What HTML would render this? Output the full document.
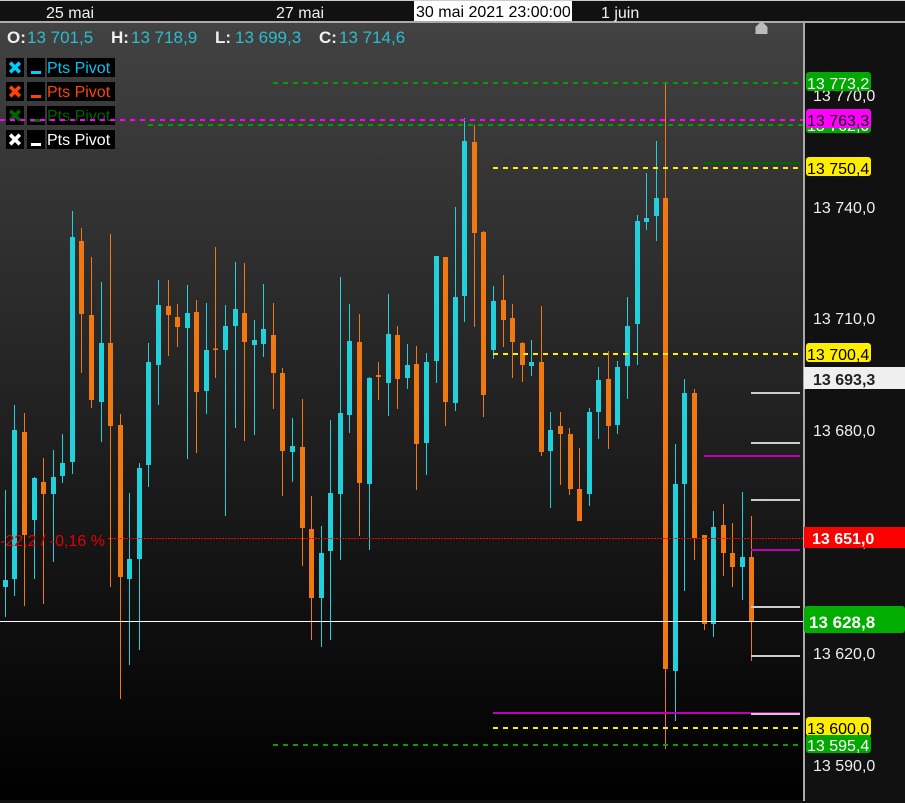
<!DOCTYPE html>
<html><head><meta charset="utf-8"><title>Chart</title>
<style>html,body{margin:0;padding:0;background:#111;width:905px;height:803px;overflow:hidden}svg{display:block}text{font-family:"Liberation Sans",sans-serif;font-size:16px}</style></head>
<body>
<svg width="905" height="803" viewBox="0 0 905 803" xmlns="http://www.w3.org/2000/svg">
<defs><linearGradient id="g" x1="0" y1="0" x2="0" y2="1"><stop offset="0" stop-color="#424242"/><stop offset="1" stop-color="#000"/></linearGradient></defs>
<rect width="905" height="803" fill="#111"/>
<rect width="905" height="1" fill="#ccc"/>
<rect y="23" width="803" height="777" fill="url(#g)"/>
<rect y="21" width="905" height="2" fill="#aaa"/>
<rect x="803" y="21" width="2" height="780" fill="#aaa"/>
<path d="M755.5 34V27L761.5 21L767.5 27V34Z" fill="#bbb"/>

<g fill="#f0f0f0">
<text x="46" y="18">25 mai</text><text x="276" y="18">27 mai</text><text x="601" y="18">1 juin</text>
</g>
<rect x="414" y="1" width="158" height="20" fill="#fff"/>
<text x="416" y="17" fill="#000">30 mai 2021 23:00:00</text>

<!-- wicks -->
<path stroke="#22d0dc" stroke-width="1" fill="none" d="M5.5 490V617M14.5 405V596M34.5 477V579M53.5 450V562M62.5 434V483M72.5 211V474M101.5 282V442M129.5 493V665M139.5 463V650M148.5 343V487M158.5 280V405M187.5 285V459M206.5 303V414M225.5 305V516M235.5 262V428M254.5 320V435M263.5 284V357M292.5 418V482M321.5 526V647M330.5 420V640M340.5 277V560M349.5 304V433M369.5 377V550M388.5 294V416M407.5 344V389M426.5 353V475M436.5 256V383M455.5 207V411M464.5 118V322M493.5 286V359M531.5 340V376M550.5 412V508M589.5 408V506M598.5 367V439M617.5 361V434M627.5 297V399M637.5 215V365M646.5 173V230M656.5 141V241M675.5 444V721M684.5 379V591M713.5 511V637M742.5 492V600"/>
<path stroke="#f07810" stroke-width="1" fill="none" d="M24.5 413V606M43.5 458V604M81.5 228V373M91.5 257V408M110.5 234V587M120.5 414V699M168.5 280V356M177.5 304V347M196.5 300V453M215.5 247V378M244.5 263V441M273.5 303V409M282.5 368V496M302.5 399V566M311.5 496V640M359.5 314V536M378.5 362V400M397.5 326V409M416.5 346V490M445.5 257V426M474.5 125V327M483.5 231V417M503.5 275V347M512.5 304V378M522.5 342V382M541.5 306V456M560.5 412V485M569.5 428V495M579.5 448V521M608.5 351V449M665.5 83V749M694.5 389V560M704.5 535V630M723.5 504V576M732.5 523V587M751.5 516V661"/>
<!-- bodies -->
<path fill="#22d0dc" d="M3 580h5V587h-5zM12 430h5V579h-5zM32 478h5V520h-5zM51 477h5V494h-5zM60 463h5V476h-5zM70 237h5V462h-5zM99 343h5V402h-5zM127 559h5V579h-5zM137 468h5V559h-5zM146 362h5V465h-5zM156 305h5V365h-5zM185 313h5V328h-5zM204 350h5V391h-5zM223 326h5V350h-5zM233 309h5V326h-5zM252 340h5V345h-5zM261 329h5V344h-5zM290 446h5V452h-5zM319 553h5V598h-5zM328 493h5V551h-5zM338 413h5V494h-5zM347 341h5V415h-5zM367 378h5V484h-5zM386 334h5V383h-5zM405 365h5V378h-5zM424 362h5V443h-5zM434 256h5V361h-5zM453 297h5V403h-5zM462 141h5V296h-5zM491 301h5V350h-5zM529 362h5V366h-5zM548 430h5V451h-5zM587 412h5V494h-5zM596 380h5V412h-5zM615 367h5V425h-5zM625 326h5V366h-5zM635 221h5V324h-5zM644 218h5V222h-5zM654 198h5V216h-5zM673 484h5V671h-5zM682 393h5V484h-5zM711 527h5V624h-5zM740 557h5V567h-5z"/>
<path fill="#f07810" d="M22 432h5V535h-5zM41 482h5V494h-5zM79 241h5V314h-5zM89 315h5V400h-5zM108 343h5V426h-5zM118 425h5V577h-5zM166 306h5V315h-5zM175 317h5V327h-5zM194 312h5V392h-5zM213 348.500h5V350h-5zM242 313h5V342h-5zM271 335h5V373h-5zM280 373h5V451h-5zM300 447h5V528h-5zM309 529h5V598h-5zM357 342h5V483h-5zM376 375h5V377h-5zM395 335h5V379h-5zM414 364h5V444h-5zM443 257h5V402h-5zM472 142h5V233h-5zM481 232h5V395h-5zM501 300h5V320h-5zM510 318h5V342h-5zM520 343h5V365h-5zM539 362h5V452h-5zM558 426h5V434h-5zM568 434h5V489h-5zM577 489h5V521h-5zM606 379h5V426h-5zM663 198h5V669h-5zM692 393h5V538h-5zM702 535h5V624h-5zM721 525h5V553h-5zM730 553h5V567h-5zM749 557h5V621h-5z"/>

<!-- short levels -->
<rect x="704" y="162" width="96" height="2" fill="#006800"/>
<rect x="704" y="455" width="96" height="2" fill="#c000b0"/>
<rect x="751" y="549" width="49" height="2" fill="#c000b0"/>
<rect x="493" y="712" width="307" height="2" fill="#c000b0"/>
<g fill="#ccc">
<rect x="751" y="392" width="49" height="2"/><rect x="751" y="442" width="49" height="2"/><rect x="751" y="499" width="49" height="2"/><rect x="751" y="606" width="49" height="2"/><rect x="751" y="655" width="49" height="2"/><rect x="751" y="713" width="49" height="2"/>
</g>

<!-- legend -->
<g>
<rect x="6" y="58" width="18" height="19" fill="#000"/><rect x="27" y="58" width="18" height="19" fill="#000"/><rect x="47" y="58" width="68" height="19" fill="#000"/>
<path d="M10.200 62.700L19.800 72.300M19.800 62.700L10.200 72.300" stroke="#00ccff" stroke-width="3.600"/>
<rect x="31" y="71" width="10" height="3" fill="#00ccff"/>
<text x="47" y="73" fill="#00c4f4">Pts Pivot</text>
<rect x="6" y="82" width="18" height="19" fill="#000"/><rect x="27" y="82" width="18" height="19" fill="#000"/><rect x="47" y="82" width="68" height="19" fill="#000"/>
<path d="M10.200 86.700L19.800 96.300M19.800 86.700L10.200 96.300" stroke="#ff4500" stroke-width="3.600"/>
<rect x="31" y="95" width="10" height="3" fill="#ff4500"/>
<text x="47" y="97" fill="#ff4500">Pts Pivot</text>
<rect x="6" y="106" width="18" height="19" fill="#000"/><rect x="27" y="106" width="18" height="19" fill="#000"/><rect x="47" y="106" width="68" height="19" fill="#000"/>
<path d="M10.200 110.700L19.800 120.300M19.800 110.700L10.200 120.300" stroke="#006400" stroke-width="3.600"/>
<rect x="31" y="119" width="10" height="3" fill="#006400"/>
<text x="47" y="121" fill="#006400">Pts Pivot</text>
<rect x="6" y="130" width="18" height="19" fill="#000"/><rect x="27" y="130" width="18" height="19" fill="#000"/><rect x="47" y="130" width="68" height="19" fill="#000"/>
<path d="M10.200 134.700L19.800 144.300M19.800 134.700L10.200 144.300" stroke="#fff" stroke-width="3.600"/>
<rect x="31" y="143" width="10" height="3" fill="#fff"/>
<text x="47" y="145" fill="#fff">Pts Pivot</text>
</g>

<!-- dashed levels -->
<g fill="none" stroke-width="2" stroke-dasharray="5 5">
<path d="M273 83H803" stroke="#00a000"/>
<path d="M148 125H803" stroke="#00a000"/>
<path d="M0 120H803" stroke="#ff00ff"/>
<path d="M493 168H803" stroke="#ffee00"/>
<path d="M493 354H803" stroke="#ffee00"/>
<path d="M493 728H803" stroke="#ffee00"/>
<path d="M273 745H803" stroke="#00a000"/>
</g>
<path d="M108 538.500H803" stroke="#f00" stroke-width="1" stroke-dasharray="2 1" fill="none"/>
<rect x="0" y="621" width="803" height="1" fill="#fff"/>
<text x="0" y="546" fill="#e60000">-22,2 / -0,16 %</text>

<!-- OHLC -->
<g>
<text x="7" y="43" fill="#f0f0f0" font-weight="bold" style="font-size:17px">O:</text><text x="27" y="43" fill="#2cbccf" style="font-size:17px">13 701,5</text>
<text x="111" y="43" fill="#f0f0f0" font-weight="bold" style="font-size:17px">H:</text><text x="131" y="43" fill="#2cbccf" style="font-size:17px">13 718,9</text>
<text x="215" y="43" fill="#f0f0f0" font-weight="bold" style="font-size:17px">L:</text><text x="235" y="43" fill="#2cbccf" style="font-size:17px">13 699,3</text>
<text x="319" y="43" fill="#f0f0f0" font-weight="bold" style="font-size:17px">C:</text><text x="339" y="43" fill="#2cbccf" style="font-size:17px">13 714,6</text>
</g>

<!-- axis -->
<g fill="#eee">
<text x="813" y="101">13 770,0</text><text x="813" y="213">13 740,0</text><text x="813" y="324">13 710,0</text><text x="813" y="436">13 680,0</text><text x="813" y="547">13 650,0</text><text x="813" y="659">13 620,0</text><text x="813" y="771">13 590,0</text>
</g>
<rect x="804" y="367" width="101" height="22" fill="#efefef"/>
<text x="813" y="385" fill="#222" font-weight="bold">13 693,3</text>
<rect x="804" y="527" width="101" height="21" fill="#f00"/>
<text x="812" y="544" fill="#fff" font-weight="bold">13 651,0</text>
<rect x="804" y="606" width="101" height="27" rx="3" fill="#00ad00"/>
<text x="809" y="628" fill="#fff" font-weight="bold" style="font-size:17px">13 628,8</text>

<rect x="806" y="72" width="65" height="19" rx="3" fill="#00a800"/>
<text x="807" y="89" fill="#fff">13 773,2</text>
<rect x="806" y="114" width="65" height="19" rx="3" fill="#00a800"/>
<text x="807" y="131" fill="#fff">13 762,0</text>
<rect x="806" y="109" width="65" height="19" rx="3" fill="#ff00ff"/>
<text x="807" y="126" fill="#000">13 763,3</text>
<rect x="806" y="157" width="65" height="19" rx="3" fill="#ffee00"/>
<text x="807" y="174" fill="#000">13 750,4</text>
<rect x="806" y="343" width="65" height="19" rx="3" fill="#ffee00"/>
<text x="807" y="360" fill="#000">13 700,4</text>
<rect x="806" y="717" width="65" height="19" rx="3" fill="#ffee00"/>
<text x="807" y="734" fill="#000">13 600,0</text>
<rect x="806" y="735" width="65" height="18" rx="3" fill="#00a800"/>
<text x="807" y="751" fill="#fff">13 595,4</text>
</svg>
</body></html>
